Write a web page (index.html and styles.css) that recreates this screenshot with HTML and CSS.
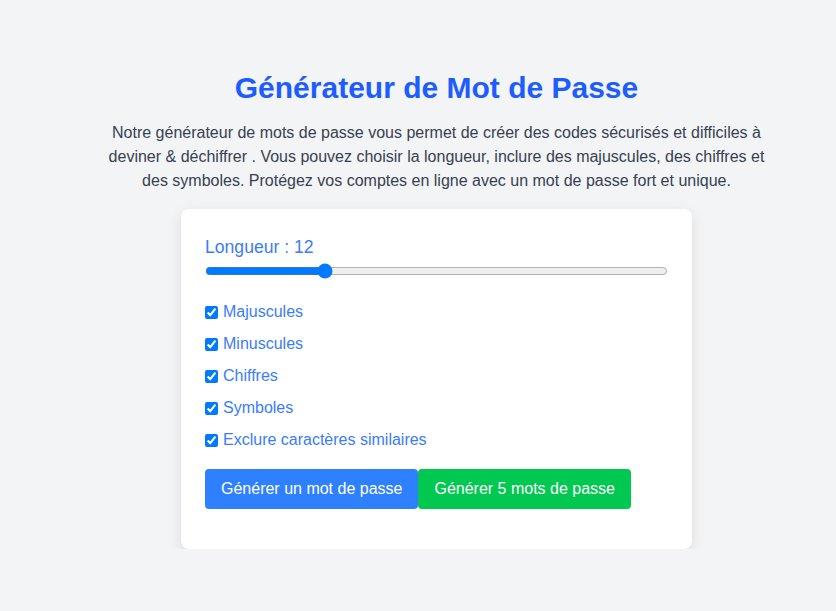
FILE: index.html
```html
<!DOCTYPE html>
<html lang="fr">
<head>
<meta charset="utf-8">
<title>Générateur de Mot de Passe</title>
<link rel="stylesheet" href="styles.css">
</head>
<body>
<main class="page">
  <h1 class="title">Générateur de Mot de Passe</h1>
  <p class="intro">Notre générateur de mots de passe vous permet de créer des codes sécurisés et difficiles à deviner &amp; déchiffrer . Vous pouvez choisir la longueur, inclure des majuscules, des chiffres et des symboles. Protégez vos comptes en ligne avec un mot de passe fort et unique.</p>
  <section class="card">
    <label class="length-label" for="length">Longueur : <span>12</span></label>
    <input class="range" id="length" type="range" min="4" max="36" value="12">
    <div class="options">
      <label class="option"><input type="checkbox" checked> Majuscules</label>
      <label class="option"><input type="checkbox" checked> Minuscules</label>
      <label class="option"><input type="checkbox" checked> Chiffres</label>
      <label class="option"><input type="checkbox" checked> Symboles</label>
      <label class="option"><input type="checkbox" checked> Exclure caractères similaires</label>
    </div>
    <div class="actions">
      <button class="btn btn-blue" type="button">Générer un mot de passe</button>
      <button class="btn btn-green" type="button">Générer 5 mots de passe</button>
    </div>
  </section>
</main>
</body>
</html>
```
FILE: styles.css
```css
html, body {
  margin: 0;
  padding: 0;
  background: #f3f4f6;
  font-family: "Liberation Sans", Arial, sans-serif;
}

.page {
  display: flex;
  flex-direction: column;
  align-items: center;
  padding: 69px 0 0 37px;
}

.title {
  margin: 0 0 15px;
  font-size: 30px;
  font-weight: 700;
  color: #1d5cff;
  line-height: 37px;
  text-align: center;
}

.intro {
  margin: 0 0 16px;
  max-width: 672px;
  font-size: 16px;
  line-height: 24px;
  color: #374151;
  text-align: center;
}

.card {
  box-sizing: border-box;
  width: 511px;
  background: #fff;
  border-radius: 8px;
  padding: 28px 24px 40px;
  box-shadow: 0 4px 14px rgba(0, 0, 0, 0.1);
}

.length-label {
  display: block;
  font-size: 17.6px;
  color: #3b7cfc;
  line-height: 20px;
}

.range {
  display: block;
  width: 100%;
  margin: 6px 0 0;
  accent-color: #007bff;
}

.options {
  display: flex;
  flex-direction: column;
  gap: 14px;
  margin-top: 24px;
}

.option {
  display: flex;
  align-items: center;
  font-size: 16px;
  line-height: 18px;
  color: #3b7cfc;
}

.option input {
  margin: 0 5px 0 0;
  width: 13px;
  height: 13px;
  accent-color: #007bff;
}

.actions {
  display: flex;
  margin-top: 20px;
}

.btn {
  font-family: inherit;
  font-size: 16px;
  line-height: 18px;
  padding: 11px 16px;
  border: none;
  border-radius: 4px;
  color: #fff;
  cursor: pointer;
}

.btn-blue {
  background: #2f80ff;
}

.btn-green {
  background: #00c851;
}
```
